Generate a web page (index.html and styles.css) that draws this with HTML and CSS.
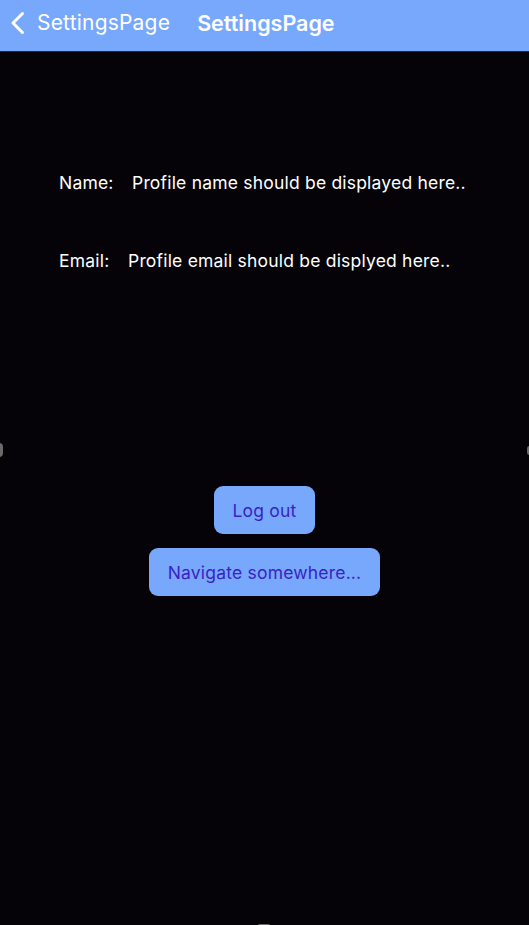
FILE: index.html
```html
<!DOCTYPE html>
<html>
<head>
<meta charset="utf-8">
<link rel="stylesheet" href="styles.css">
</head>
<body>
<div class="screen">
  <header class="navbar">
    <div class="back">
      <svg class="chevron" width="16" height="24" viewBox="0 0 16 24"><path d="M12.5 2.5 L3 12 L12.5 21.5" fill="none" stroke="#fff" stroke-width="3" stroke-linecap="round" stroke-linejoin="round"/></svg>
      <span class="back-label">SettingsPage</span>
    </div>
    <div class="title">SettingsPage</div>
  </header>
  <main class="content">
    <div class="profile">
      <div class="row name-row"><span class="label">Name:</span><span class="value">Profile name should be displayed here..</span></div>
      <div class="row email-row"><span class="label">Email:</span><span class="value">Profile email should be displyed here..</span></div>
    </div>
    <div class="actions">
      <button class="btn btn-logout">Log out</button>
      <button class="btn btn-nav">Navigate somewhere...</button>
    </div>
  </main>
  <span class="edge edge-left"></span>
  <span class="edge edge-right"></span>
  <span class="edge edge-bottom"></span>
</div>
</body>
</html>
```
FILE: styles.css
```css
html, body {
  margin: 0;
  padding: 0;
  background: #050307;
}
body {
  font-family: Inter, "Noto Sans", "Liberation Sans", sans-serif;
  color: #fff;
}
.screen {
  position: relative;
  width: 529px;
  height: 925px;
  overflow: hidden;
  background: #050307;
}
.navbar {
  box-sizing: border-box;
  height: 52px;
  padding-bottom: 6px;
  background: #77a8fc;
  display: flex;
  align-items: center;
  border-bottom: 1px solid #1e2a40;
}
.back {
  display: flex;
  align-items: center;
  padding-left: 10px;
}
.chevron {
  display: block;
  margin-right: 11px;
}
.back-label {
  font-size: 21px;
  letter-spacing: 0.2px;
  color: #fff;
}
.title {
  margin-left: 27px;
  font-size: 21.5px;
  font-weight: 600;
  color: #fff;
}
.content {
  display: flex;
  flex-direction: column;
}
.profile {
  padding: 120px 0 0 59px;
  display: flex;
  flex-direction: column;
  gap: 57px;
}
.row {
  font-size: 17.5px;
  letter-spacing: 0.2px;
  line-height: 21px;
  display: flex;
}
.name-row .label { width: 73px; }
.email-row .label { width: 69px; }
.actions {
  margin-top: 215px;
  display: flex;
  flex-direction: column;
  align-items: center;
  gap: 14px;
}
.btn {
  font-family: Inter, "Noto Sans", "Liberation Sans", sans-serif;
  font-size: 17.5px;
  letter-spacing: 0.2px;
  color: #3b22c6;
  background: #77a8fc;
  border: none;
  border-radius: 9px;
  height: 48px;
  padding: 0;
  cursor: pointer;
}
.btn-logout { width: 101px; }
.btn-nav { width: 231px; }
.edge {
  position: absolute;
  background: #6a6a6a;
  border-radius: 8px;
}
.edge-left {
  left: -5px;
  top: 443px;
  width: 8px;
  height: 14px;
}
.edge-right {
  right: -3px;
  top: 446px;
  width: 5px;
  height: 9px;
}
.edge-bottom {
  left: 258px;
  bottom: -2px;
  width: 12px;
  height: 3px;
}
```
